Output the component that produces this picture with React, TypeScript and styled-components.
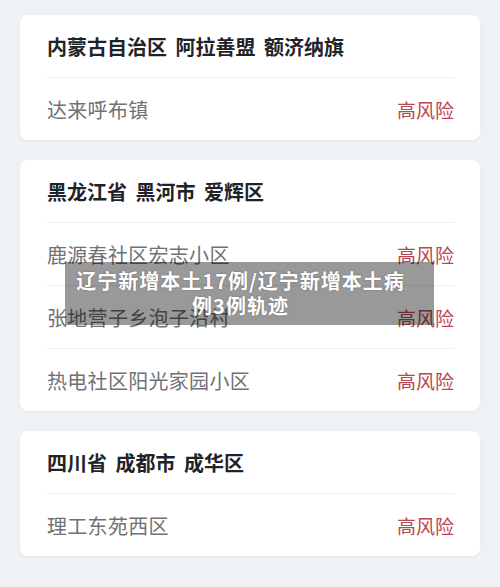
import React from "react";
import styled, { createGlobalStyle } from "styled-components";

const GlobalStyle = createGlobalStyle`
  html, body {
    margin: 0;
    padding: 0;
    background: #eff2f5;
  }
  body {
    font-family: "Noto Sans CJK SC", "Noto Sans", sans-serif;
  }
`;

const Page = styled.div`
  position: relative;
  display: flex;
  flex-direction: column;
  gap: 20px;
  padding: 15px 20px 32px;
  min-height: 587px;
  box-sizing: border-box;
`;

const Card = styled.section`
  background: #ffffff;
  border-radius: 8px;
  box-shadow: 0 1px 3px rgba(0, 0, 0, 0.05);
  padding: 0 26px 0 27px;
`;

const Title = styled.h2`
  margin: 0;
  height: 62px;
  display: flex;
  align-items: center;
  font-size: 20px;
  font-weight: 700;
  color: #1f2328;
  word-spacing: 4px;
  border-bottom: 1px solid #eef0f2;
`;

const Row = styled.div<{ $last?: boolean }>`
  height: 62px;
  display: flex;
  align-items: center;
  justify-content: space-between;
  font-size: 20px;
  letter-spacing: 0.3px;
  border-bottom: ${(p) => (p.$last ? "none" : "1px solid #eef0f2")};
`;

const Place = styled.span`
  color: #6f7175;
`;

const Risk = styled.span`
  color: #b8474d;
  font-size: 19px;
  letter-spacing: 0;
`;

const Banner = styled.div`
  position: absolute;
  left: 65px;
  top: 262px;
  width: 369px;
  height: 63px;
  box-sizing: border-box;
  padding: 4px 24px 6px 6px;
  background: rgba(0, 0, 0, 0.4);
  color: #ffffff;
  font-size: 20px;
  font-weight: 700;
  line-height: 25px;
  letter-spacing: 1px;
  text-align: center;
  text-shadow: 0 0 2px rgba(0, 0, 0, 0.3);
  display: flex;
  align-items: center;
  justify-content: center;
`;

type Area = { title: string; places: string[] };

const areas: Area[] = [
  { title: "内蒙古自治区 阿拉善盟 额济纳旗", places: ["达来呼布镇"] },
  {
    title: "黑龙江省 黑河市 爱辉区",
    places: ["鹿源春社区宏志小区", "张地营子乡泡子沿村", "热电社区阳光家园小区"],
  },
  { title: "四川省 成都市 成华区", places: ["理工东苑西区"] },
];

export default function App() {
  return (
    <>
      <GlobalStyle />
      <Page>
        {areas.map((area) => (
          <Card key={area.title}>
            <Title>{area.title}</Title>
            {area.places.map((place, i) => (
              <Row key={place} $last={i === area.places.length - 1}>
                <Place>{place}</Place>
                <Risk>高风险</Risk>
              </Row>
            ))}
          </Card>
        ))}
        <Banner>辽宁新增本土17例/辽宁新增本土病例3例轨迹</Banner>
      </Page>
    </>
  );
}
